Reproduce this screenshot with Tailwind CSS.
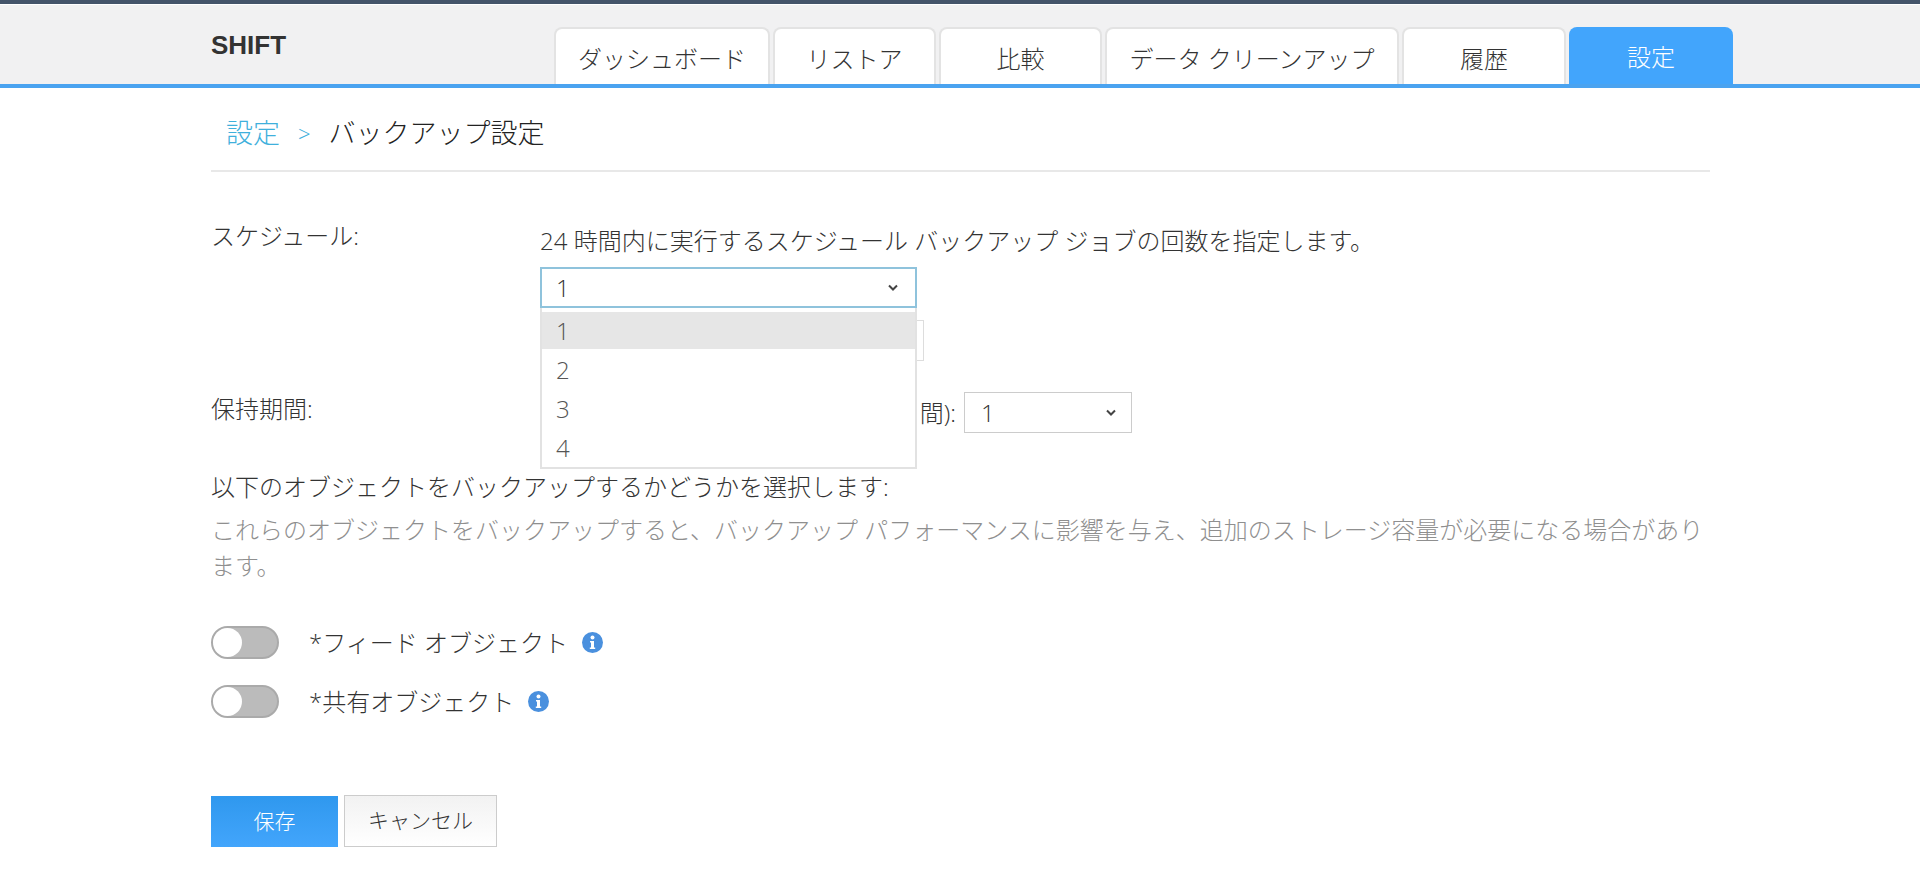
<!DOCTYPE html>
<html lang="ja">
<head>
    <meta charset="UTF-8">
    <title>SHIFT - バックアップ設定</title>
    <script src="https://cdn.jsdelivr.net/npm/@tailwindcss/browser@4"></script>
</head>
<body class="bg-white h-[892px] overflow-hidden font-['Open_Sans','Noto_Sans_CJK_JP',sans-serif] text-[#333] text-[24px] font-light">
    <!-- Top bars -->
    <div class="h-[4px] bg-[#44546a]"></div>
    <div class="h-[1px] bg-white"></div>
    <header class="h-[83px] bg-[#f1f1f2] border-b-4 border-[#4aa3f0] flex pl-[211px]">
        <div class="w-[343px] pt-[24px] text-[26px] leading-[32px] font-bold font-['Liberation_Sans',sans-serif] text-[#333]">SHIFT</div>
        <nav class="flex gap-[3px] pt-[22px] text-center">
            <a class="w-[216px] h-[57px] leading-[60px] bg-white border-2 border-b-0 border-[#e3e3e3] rounded-t-lg">ダッシュボード</a>
            <a class="w-[163px] h-[57px] leading-[60px] bg-white border-2 border-b-0 border-[#e3e3e3] rounded-t-lg">リストア</a>
            <a class="w-[163px] h-[57px] leading-[60px] bg-white border-2 border-b-0 border-[#e3e3e3] rounded-t-lg">比較</a>
            <a class="w-[294px] h-[57px] leading-[60px] bg-white border-2 border-b-0 border-[#e3e3e3] rounded-t-lg">データ クリーンアップ</a>
            <a class="w-[164px] h-[57px] leading-[60px] bg-white border-2 border-b-0 border-[#e3e3e3] rounded-t-lg">履歴</a>
            <a class="w-[164px] h-[57px] leading-[60px] bg-[#42a5fc] text-white rounded-t-lg">設定</a>
        </nav>
    </header>

    <main class="ml-[211px] w-[1499px]">
        <!-- Breadcrumb -->
        <div class="h-[84px] border-b-2 border-[#e8e8e8] flex items-center pl-[15px] pt-[8px] text-[27px] text-[#222]">
            <span class="text-[#3fb0dc]">設定</span>
            <span class="text-[#3fb0dc] text-[22px] mx-[18px]">&gt;</span>
            <span>バックアップ設定</span>
        </div>

        <!-- Schedule -->
        <div class="flex mt-[47px]">
            <div class="w-[329px] leading-[34px]">スケジュール:</div>
            <div class="relative flex-1">
                <p class="leading-[34px] mt-[5px]">24 時間内に実行するスケジュール バックアップ ジョブの回数を指定します。</p>
                <div class="w-[377px] h-[41px] mt-[9px] border-2 border-[#8fc3dc] bg-white flex items-center justify-between pl-[14px] pr-[16px]">
                    <span>1</span>
                    <svg class="w-[12px] h-[8px]" viewBox="0 0 12 8" fill="none" stroke="#444" stroke-width="2"><path d="M2 1.5 L6 5.5 L10 1.5"/></svg>
                </div>
                <div class="w-[384px] h-[41px] mt-[12px] border border-[#ddd] bg-white"></div>

                <!-- Open dropdown -->
                <div class="absolute left-0 top-[89px] z-10 w-[377px] h-[161px] bg-white border-2 border-t-0 border-[#e2e2e2] pt-[4px] text-[#555]">
                    <div class="h-[37px] leading-[37px] pl-[14px] bg-[#e6e6e6]">1</div>
                    <div class="h-[39px] leading-[41px] pl-[14px]">2</div>
                    <div class="h-[39px] leading-[41px] pl-[14px]">3</div>
                    <div class="h-[39px] leading-[41px] pl-[14px]">4</div>
                </div>
            </div>
        </div>

        <!-- Retention -->
        <div class="flex items-start mt-[31px]">
            <div class="w-[329px] leading-[34px]">保持期間:</div>
            <div class="flex items-center">
                <span class="w-[416px] text-right">(日間):</span>
                <div class="ml-[8px] w-[168px] h-[41px] border border-[#ccc] flex items-center justify-between pl-[16px] pr-[14px]">
                    <span>1</span>
                    <svg class="w-[12px] h-[8px]" viewBox="0 0 12 8" fill="none" stroke="#444" stroke-width="2"><path d="M2 1.5 L6 5.5 L10 1.5"/></svg>
                </div>
            </div>
        </div>

        <!-- Objects -->
        <p class="mt-[37px] leading-[34px]">以下のオブジェクトをバックアップするかどうかを選択します:</p>
        <p class="mt-[8px] leading-[36px] text-[#8f8f8f]">これらのオブジェクトをバックアップすると、バックアップ パフォーマンスに影響を与え、追加のストレージ容量が必要になる場合があります。</p>

        <div class="flex items-center mt-[42px] h-[33px]">
            <div class="w-[68px] h-[33px] rounded-full bg-[#bbb] border-2 border-[#aaa]"><div class="w-[29px] h-[29px] rounded-full bg-white"></div></div>
            <span class="ml-[30px]">*フィード オブジェクト</span>
            <svg class="ml-[14px] w-[21px] h-[21px]" viewBox="0 0 21 21"><circle cx="10.5" cy="10.5" r="10.5" fill="#4a90de"/><circle cx="10.5" cy="5.5" r="2" fill="#fff"/><path d="M8 9 h4 v6.5 h1.2 v1.5 h-5.4 v-1.5 h1.2 v-5 h-1z" fill="#fff"/></svg>
        </div>
        <div class="flex items-center mt-[26px] h-[33px]">
            <div class="w-[68px] h-[33px] rounded-full bg-[#bbb] border-2 border-[#aaa]"><div class="w-[29px] h-[29px] rounded-full bg-white"></div></div>
            <span class="ml-[30px]">*共有オブジェクト</span>
            <svg class="ml-[14px] w-[21px] h-[21px]" viewBox="0 0 21 21"><circle cx="10.5" cy="10.5" r="10.5" fill="#4a90de"/><circle cx="10.5" cy="5.5" r="2" fill="#fff"/><path d="M8 9 h4 v6.5 h1.2 v1.5 h-5.4 v-1.5 h1.2 v-5 h-1z" fill="#fff"/></svg>
        </div>

        <!-- Actions -->
        <div class="flex gap-[6px] mt-[78px]">
            <button class="w-[127px] h-[51px] text-white bg-gradient-to-b from-[#2f98ee] to-[#42a5fc] text-[21px]">保存</button>
            <button class="w-[153px] h-[52px] -mt-[1px] border border-[#ccc] bg-gradient-to-b from-[#f2f2f2] to-white text-[21px]">キャンセル</button>
        </div>
    </main>
</body>
</html>
